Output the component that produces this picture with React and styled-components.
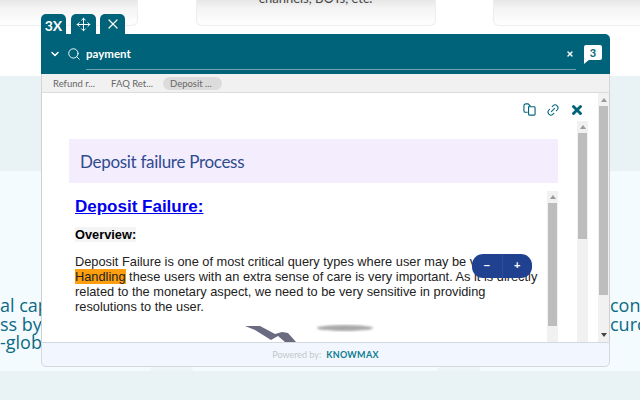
import styled, { createGlobalStyle } from 'styled-components'
import { ChevronDown, Link2, Move, Search, X } from 'lucide-react'

const GlobalStyle = createGlobalStyle`
  html, body {
    margin: 0;
    padding: 0;
    background: #fff;
    overflow: hidden;
  }
  * {
    box-sizing: border-box;
  }
`

const Page = styled.div`
  position: relative;
  width: 640px;
  height: 400px;
  overflow: hidden;
  font-family: 'Liberation Sans', Arial, sans-serif;
`

const CardsBand = styled.div`
  height: 76px;
  background: #fff;
`

const CardRow = styled.div`
  display: flex;
  justify-content: space-between;
  margin: 0 -100px;
`

const Card = styled.div`
  width: ${({ $width }) => $width}px;
  height: 26px;
  overflow: hidden;
  text-align: center;
  font-family: 'Lato', sans-serif;
  font-size: 13px;
  line-height: 16px;
  color: #444;
  border: 1px solid #eeeeee;
  border-top: 0;
  border-radius: 0 0 6px 6px;
  background: linear-gradient(#e6e6e6 0, #f4f4f4 8px, #fcfcfc 20px, #fff 26px);
`

const CardText = styled.div`
  margin-top: -10px;
`

const PaleBand = styled.div`
  height: 95px;
  background: #e9f2f5;
`

const LightBand = styled.div`
  height: 200px;
  padding-top: 125px;
  background: #f4fbfe;
  display: flex;
  justify-content: space-between;
`

const Blurb = styled.div`
  width: ${({ $width }) => $width}px;
  overflow: hidden;
  white-space: nowrap;
  font-family: 'Open Sans', sans-serif;
  font-size: 18px;
  line-height: 18.5px;
  color: #0c6a84;
`

const BottomBand = styled.div`
  height: 29px;
  padding-left: 150px;
  background: #e9f2f5;
  display: flex;
  gap: 244px;
`

const Bump = styled.div`
  width: 43px;
  height: 4px;
  margin-top: -4px;
  border-radius: 20px 20px 0 0;
  background: #edf5f6;
`

const Popup = styled.div`
  position: absolute;
  left: 41px;
  top: 14px;
  width: 569px;
`

const Tabs = styled.div`
  display: flex;
  height: 20px;
`

const Tab = styled.div`
  width: 25px;
  margin-right: ${({ $gap }) => $gap}px;
  padding-top: ${({ $drop }) => $drop || 0}px;
  display: flex;
  align-items: center;
  justify-content: center;
  border-radius: 5px 5px 0 0;
  background: #00637a;
  color: #fff;
  font-family: 'Lato', sans-serif;
  font-size: 14px;
  font-weight: 700;
`

const Header = styled.div`
  height: 40px;
  padding: 0 8px;
  display: flex;
  align-items: center;
  border-radius: 0 5px 0 0;
  background: #00637a;
  color: #fff;
`

const SearchField = styled.div`
  flex: 1;
  height: 32px;
  margin: 0 8px 0 5px;
  padding-right: 2px;
  display: flex;
  align-items: center;
  justify-content: space-between;
  border-bottom: 1px solid #6da2b0;
  font-family: 'Lato', sans-serif;
  font-size: 11.5px;
  font-weight: 700;
`

const SearchIcon = styled(Search)`
  margin-left: 6px;
`

const Bubble = styled.div`
  position: relative;
  width: 18px;
  height: 15px;
  margin-top: -3px;
  border-radius: 2px;
  background: #fff;
  color: #00637a;
  font-family: 'Lato', sans-serif;
  font-size: 11px;
  font-weight: 700;
  line-height: 15px;
  text-align: center;
`

const BubbleTail = styled.svg`
  position: absolute;
  left: 0;
  top: 14px;
`

const TabBar = styled.div`
  height: 19px;
  padding: 0 0 0 11px;
  display: flex;
  align-items: center;
  gap: 16px;
  border-left: 1px solid #d4d4d4;
  border-right: 1px solid #d4d4d4;
  border-bottom: 1px solid #dcdcdc;
  background: #f1f1f1;
  font-family: 'Lato', sans-serif;
  font-size: 9.5px;
  color: #666;
`

const DocTab = styled.div`
  height: 13px;
  line-height: 13px;
  padding: ${({ $active }) => ($active ? '0 10px 0 7px' : '0')};
  margin-left: ${({ $active }) => ($active ? '-6px' : '0')};
  border-radius: 7px;
  background: ${({ $active }) => ($active ? '#dcdcdc' : 'transparent')};
`

const Body = styled.div`
  height: 249px;
  display: flex;
  border-left: 1px solid #cfcfcf;
  border-right: 1px solid #cfcfcf;
  background: #fff;
`

const Content = styled.div`
  flex: 1;
  min-width: 0;
  display: flex;
  flex-direction: column;
`

const Actions = styled.div`
  flex: none;
  height: 28px;
  padding: 10px 14px 0 0;
  display: flex;
  justify-content: flex-end;
  align-items: flex-start;
  gap: 10px;
  color: #00637a;
`

const LinkIcon = styled(Link2)`
  transform: rotate(-45deg);
`

const ArticleRow = styled.div`
  flex: 1;
  min-height: 0;
  display: flex;
`

const Article = styled.div`
  width: 516px;
  padding: 18px 0 0 27px;
  overflow: hidden;
`

const TitleBar = styled.div`
  width: 489px;
  height: 44px;
  padding-left: 11px;
  display: flex;
  align-items: center;
  background: #f3edfe;
  font-family: 'Lato', sans-serif;
  font-size: 17px;
  letter-spacing: -0.3px;
  color: #2f4b8f;
`

const Doc = styled.div`
  width: 489px;
  height: 151px;
  margin-top: 8px;
  display: flex;
  overflow: hidden;
`

const DocText = styled.div`
  flex: 1;
  min-width: 0;
  padding-left: 6px;
  color: #222;
  font-size: 12.8px;
  line-height: 15px;
`

const DocHeading = styled.a`
  display: block;
  margin-top: 5px;
  font-size: 17px;
  font-weight: 700;
  line-height: 21px;
  color: #0000ee;
  text-decoration: underline;
`

const Overview = styled.div`
  margin-top: 10px;
  font-weight: 700;
  color: #000;

  span {
    background: #f4f4f4;
  }
`

const Paragraph = styled.p`
  margin: 12px 0 0;
  white-space: nowrap;
`

const Mark = styled.span`
  background: #ff9f10;
`

const Figure = styled.svg`
  display: block;
  margin: 11px 0 0 170px;
  overflow: visible;
`

const Rail = styled.div`
  flex: none;
  width: 11px;
  display: flex;
  flex-direction: column;
  align-items: center;
  background: #f1f1f1;
`

const Arrow = styled.div`
  flex: none;
  height: ${({ $height }) => $height}px;
  display: flex;
  align-items: center;

  &::before {
    content: '';
    border-left: 3.5px solid transparent;
    border-right: 3.5px solid transparent;
    ${({ $down }) =>
      $down ? 'border-top: 4px solid #444;' : 'border-bottom: 4px solid #9a9a9a;'}
  }
`

const Thumb = styled.div`
  flex: none;
  width: calc(100% - 2px);
  height: ${({ $height }) => $height}px;
  background: #bdbdbd;
`

const Spacer = styled.div`
  flex: 1;
`

const MiddleRail = styled(Rail)`
  margin-left: 19px;
`

const Footer = styled.div`
  height: 25px;
  display: flex;
  align-items: center;
  justify-content: center;
  gap: 5px;
  border: 1px solid #d4d8de;
  border-radius: 0 0 5px 5px;
  background: #f2f6fe;
  font-family: 'Lato', sans-serif;
  font-size: 9px;
  color: #c3c6cc;
`

const Brand = styled.span`
  font-size: 9px;
  font-weight: 700;
  letter-spacing: 0.3px;
  color: #0f7c8e;
`

const ZoomPill = styled.div`
  position: absolute;
  left: 431px;
  top: 240px;
  width: 60px;
  height: 24px;
  display: flex;
  border-radius: 11px;
  background: #1f418f;
  color: #fff;
  font-size: 11px;
  font-weight: 700;
`

const ZoomButton = styled.div`
  flex: 1;
  padding-top: 3px;
  text-align: center;
  line-height: 17px;

  & + & {
    border-left: 1px solid #2b4d9b;
  }
`

const TAB_LABELS = ['Refund r...', 'FAQ Ret...']

const App = () => {
  return (
    <Page>
      <GlobalStyle />
      <CardsBand>
        <CardRow>
          <Card $width={238} />
          <Card $width={240}>
            <CardText>channels, BOTs, etc.</CardText>
          </Card>
          <Card $width={247} />
        </CardRow>
      </CardsBand>
      <PaleBand />
      <LightBand>
        <Blurb $width={50}>
          al cap
          <br />
          ss by
          <br />
          -glob
        </Blurb>
        <Blurb $width={30}>
          cont
          <br />
          curc
        </Blurb>
      </LightBand>
      <BottomBand>
        <Bump />
        <Bump />
      </BottomBand>

      <Popup>
        <Tabs>
          <Tab $gap={5} $drop={3}>
            3X
          </Tab>
          <Tab $gap={4}>
            <Move size={15} strokeWidth={1.6} />
          </Tab>
          <Tab $gap={0}>
            <X size={16} strokeWidth={1.8} />
          </Tab>
        </Tabs>
        <Header>
          <ChevronDown size={12} strokeWidth={3} />
          <SearchIcon size={14} strokeWidth={1.6} />
          <SearchField>
            payment
            <X size={8} strokeWidth={4} />
          </SearchField>
          <Bubble>
            3
            <BubbleTail width="6" height="5" viewBox="0 0 6 5">
              <path d="M0 0h6L0 5z" fill="#fff" />
            </BubbleTail>
          </Bubble>
        </Header>
        <TabBar>
          {TAB_LABELS.map((label) => (
            <DocTab key={label}>{label}</DocTab>
          ))}
          <DocTab $active>Deposit ...</DocTab>
        </TabBar>
        <Body>
          <Content>
            <Actions>
              <svg width="13" height="13" viewBox="0 0 14 14" fill="none" stroke="currentColor" strokeWidth="1.2">
                <path d="M5 10H2.5a1.5 1.5 0 0 1-1.5-1.5V3a2 2 0 0 1 2-2h2.5L8 3.5" />
                <path d="M6 4h6a1 1 0 0 1 1 1v7a1 1 0 0 1-1 1H7a1 1 0 0 1-1-1z" />
              </svg>
              <LinkIcon size={14} strokeWidth={1.7} />
              <X size={14} strokeWidth={5} />
            </Actions>
            <ArticleRow>
              <Article>
                <TitleBar>Deposit failure Process</TitleBar>
                <Doc>
                  <DocText>
                    <DocHeading>Deposit Failure:</DocHeading>
                    <Overview>
                      <span>Overview:</span>
                    </Overview>
                    <Paragraph>
                      Deposit Failure is one of most critical query types where user may be very
                      <br />
                      <Mark>Handling</Mark> these users with an extra sense of care is very important. As it is directly
                      <br />
                      related to the monetary aspect, we need to be very sensitive in providing
                      <br />
                      resolutions to the user.
                    </Paragraph>
                    <Figure width="135" height="18" viewBox="0 0 135 18">
                      <defs>
                        <filter id="soft-shadow">
                          <feGaussianBlur stdDeviation="1.2" />
                        </filter>
                      </defs>
                      <path d="M0 1h15l15 8 7-2 6 1 8 9H40l-7-6-7 4-16-10z" fill="#6a6a80" />
                      <ellipse cx="100" cy="3" rx="28" ry="3" fill="#a9a9a9" filter="url(#soft-shadow)" />
                    </Figure>
                  </DocText>
                  <Rail>
                    <Arrow $height={12} />
                    <Thumb $height={123} />
                    <Spacer />
                  </Rail>
                </Doc>
              </Article>
              <MiddleRail>
                <Arrow $height={12} />
                <Thumb $height={106} />
                <Spacer />
              </MiddleRail>
            </ArticleRow>
          </Content>
          <Rail>
            <Arrow $height={13} />
            <Thumb $height={189} />
            <Spacer />
            <Arrow $height={14} $down />
          </Rail>
        </Body>
        <Footer>
          Powered by:
          <Brand>KNOWMAX</Brand>
        </Footer>
        <ZoomPill>
          <ZoomButton>–</ZoomButton>
          <ZoomButton>+</ZoomButton>
        </ZoomPill>
      </Popup>
    </Page>
  )
}

export default App
